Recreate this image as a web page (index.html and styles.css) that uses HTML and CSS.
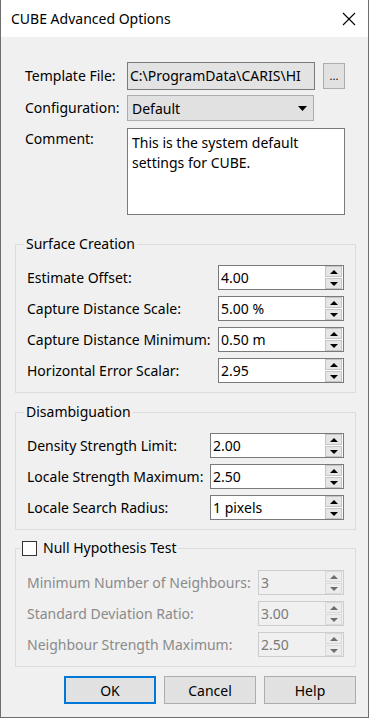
FILE: index.html
```html
<!DOCTYPE html>
<html lang="en">
<head>
    <meta charset="UTF-8">
    <meta name="viewport" content="width=device-width, initial-scale=1.0">
    <title>CUBE Advanced Options</title>
    <link rel="stylesheet" href="styles.css">
</head>
<body>
    <div class="dialog">
        <div class="titlebar">
            <span class="title">CUBE Advanced Options</span>
            <svg class="close" width="14" height="14" viewBox="0 0 14 14">
                <path d="M1 1 L13 13 M13 1 L1 13" stroke="#000" stroke-width="1.1" fill="none"/>
            </svg>
        </div>

        <div class="content">
            <div class="top-row">
                <span class="label">Template File:</span>
                <div class="file-field">C:\ProgramData\CARIS\HI</div>
                <button class="browse">...</button>
            </div>
            <div class="top-row config">
                <span class="label">Configuration:</span>
                <div class="select">
                    <span>Default</span>
                    <svg width="9" height="5" viewBox="0 0 9 5"><path d="M0 0 H9 L4.5 5 Z" fill="#000"/></svg>
                </div>
            </div>
            <div class="top-row comment">
                <span class="label">Comment:</span>
                <div class="memo">This is the system default settings for CUBE.</div>
            </div>

            <div class="group surface">
                <div class="group-title">Surface Creation</div>
                <div class="row"><span>Estimate Offset:</span><div class="spin"><span class="val">4.00</span><div class="arrows"><i class="up"></i><i class="down"></i></div></div></div>
                <div class="row"><span>Capture Distance Scale:</span><div class="spin"><span class="val">5.00 %</span><div class="arrows"><i class="up"></i><i class="down"></i></div></div></div>
                <div class="row"><span>Capture Distance Minimum:</span><div class="spin"><span class="val">0.50 m</span><div class="arrows"><i class="up"></i><i class="down"></i></div></div></div>
                <div class="row"><span>Horizontal Error Scalar:</span><div class="spin"><span class="val">2.95</span><div class="arrows"><i class="up"></i><i class="down"></i></div></div></div>
            </div>

            <div class="group disamb">
                <div class="group-title">Disambiguation</div>
                <div class="row"><span>Density Strength Limit:</span><div class="spin"><span class="val">2.00</span><div class="arrows"><i class="up"></i><i class="down"></i></div></div></div>
                <div class="row"><span>Locale Strength Maximum:</span><div class="spin"><span class="val">2.50</span><div class="arrows"><i class="up"></i><i class="down"></i></div></div></div>
                <div class="row"><span>Locale Search Radius:</span><div class="spin"><span class="val">1 pixels</span><div class="arrows"><i class="up"></i><i class="down"></i></div></div></div>
            </div>

            <div class="group null disabled">
                <div class="group-title"><span class="check"></span>Null Hypothesis Test</div>
                <div class="row"><span>Minimum Number of Neighbours:</span><div class="spin"><span class="val">3</span><div class="arrows"><i class="up"></i><i class="down"></i></div></div></div>
                <div class="row"><span>Standard Deviation Ratio:</span><div class="spin"><span class="val">3.00</span><div class="arrows"><i class="up"></i><i class="down"></i></div></div></div>
                <div class="row"><span>Neighbour Strength Maximum:</span><div class="spin"><span class="val">2.50</span><div class="arrows"><i class="up"></i><i class="down"></i></div></div></div>
            </div>

            <div class="buttons">
                <button class="btn default">OK</button>
                <button class="btn">Cancel</button>
                <button class="btn">Help</button>
            </div>
        </div>
    </div>
</body>
</html>
```

FILE: styles.css
```css
body {
    margin: 0;
    background: #f0f0f0;
    font-family: "Noto Sans", "Open Sans", sans-serif;
    font-size: 14px;
    color: #000;
}

.dialog {
    width: 369px;
    height: 718px;
    box-sizing: border-box;
    border: 1px solid #6e6e6e;
    border-top: none;
    background: #f0f0f0;
    overflow: hidden;
}

/* title bar */
.titlebar {
    height: 37px;
    background: #fff;
    display: flex;
    align-items: center;
    justify-content: space-between;
    padding: 0 12px 0 10px;
}

.title {
    line-height: 20px;
}

.close {
    margin-top: 1px;
}

.content {
    padding-top: 25px;
}

/* top part */
.top-row {
    display: flex;
    align-items: center;
    padding-left: 24px;
}

.top-row .label {
    width: 102px;
    line-height: 20px;
}

.file-field {
    width: 184px;
    height: 26px;
    box-sizing: content-box;
    line-height: 26px;
    border: 1px solid #7a7a7a;
    background: #e3e3e3;
    padding-left: 2px;
    white-space: nowrap;
    overflow: hidden;
}

.browse {
    margin-left: 8px;
    width: 22px;
    height: 26px;
    border: 1px solid #adadad;
    background: #e1e1e1;
    font-family: inherit;
    font-size: 11px;
    padding: 0;
    line-height: 20px;
}

.config {
    margin-top: 5px;
}

.select {
    width: 187px;
    height: 26px;
    box-sizing: border-box;
    border: 1px solid #adadad;
    background: #e1e1e1;
    display: flex;
    align-items: center;
    justify-content: space-between;
    padding: 0 6px 0 4px;
}

.comment {
    margin-top: 7px;
    align-items: flex-start;
}

.comment .label {
    margin-top: 1px;
}

.memo {
    width: 218px;
    height: 87px;
    box-sizing: border-box;
    border: 1px solid #7a7a7a;
    background: #fff;
    padding: 4px 10px 0 4px;
    line-height: 20px;
}

/* group boxes */
.group {
    margin: 29px 12px 0 14px;
    border: 1px solid #dcdcdc;
    padding: 0 11px 9px 11px;
    display: flex;
    flex-direction: column;
    gap: 6px;
}

.group-title {
    align-self: flex-start;
    margin: -11px 0 5px -3px;
    padding: 0 2px;
    background: #f0f0f0;
    line-height: 20px;
    display: flex;
    align-items: center;
}

.disamb {
    margin-top: 19px;
}

.null {
    margin-top: 18px;
}

.null .group-title {
    margin-left: -6px;
    margin-bottom: 6px;
    padding: 0 2px 0 1px;
    color: #000;
}

.check {
    width: 13px;
    height: 13px;
    border: 1px solid #333;
    background: #fff;
    margin-right: 6px;
}

.row {
    display: flex;
    justify-content: space-between;
    align-items: center;
    height: 25px;
}

.spin {
    height: 25px;
    box-sizing: border-box;
    border: 1px solid #7a7a7a;
    background: #fff;
    display: flex;
    align-items: center;
    justify-content: space-between;
}

.surface .spin { width: 126px; }
.disamb .spin { width: 134px; }
.null .spin { width: 86px; }

.spin .val {
    padding-left: 2px;
}

.arrows {
    display: flex;
    flex-direction: column;
    gap: 1px;
    margin-right: 1px;
}

.arrows i {
    width: 15px;
    height: 9px;
    border: 1px solid #c4c4c4;
    background: #e6e6e6;
    display: flex;
    align-items: center;
    justify-content: center;
}

.arrows i::after {
    content: "";
    border-left: 4px solid transparent;
    border-right: 4px solid transparent;
}

.arrows .up::after {
    border-bottom: 4px solid #000;
}

.arrows .down::after {
    border-top: 4px solid #000;
}

.disabled .row > span {
    color: #8a8a8a;
}

.disabled .spin {
    background: #f0f0f0;
    border-color: #cccccc;
    color: #7a7a7a;
}

.disabled .arrows i {
    border-color: #d9d9d9;
    background: #ececec;
}

.disabled .arrows .up::after {
    border-bottom-color: #6d6d6d;
}

.disabled .arrows .down::after {
    border-top-color: #6d6d6d;
}

/* bottom buttons */
.buttons {
    display: flex;
    justify-content: flex-end;
    gap: 8px;
    padding: 9px 12px 0 0;
}

.btn {
    width: 92px;
    height: 28px;
    border: 1px solid #adadad;
    background: #e1e1e1;
    font-family: inherit;
    font-size: 14px;
    color: #000;
    padding: 0;
}

.btn.default {
    border: 2px solid #0078d7;
}
```
